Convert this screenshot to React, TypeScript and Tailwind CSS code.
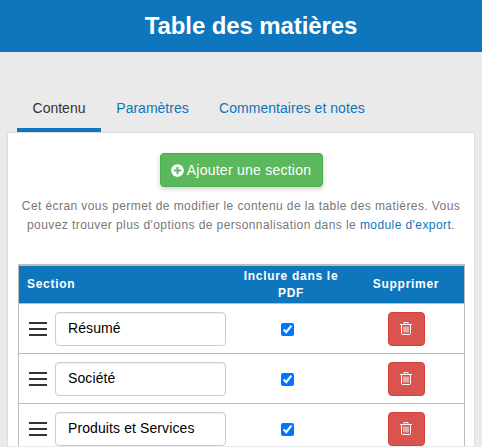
import { FaPlusCircle } from 'react-icons/fa';

const rows = ['Résumé', 'Société', 'Produits et Services'];

function TrashIcon() {
  return (
    <svg width="12" height="13" viewBox="0 0 12 13" fill="none" stroke="white" strokeWidth="1">
      <path d="M0 2.5h12M4 2.5V.5h4v2" />
      <path d="M1.5 2.5v9a1 1 0 0 0 1 1h7a1 1 0 0 0 1-1v-9" />
      <path d="M4 4.5v6M6 4.5v6M8 4.5v6" />
    </svg>
  );
}

function Row({ label }: { label: string }) {
  return (
    <div className="grid grid-cols-[219px_1fr_120px] h-[50px] items-center border-b border-[#bbbbbb] shrink-0">
      <div className="flex items-center pl-[10px] gap-2">
        <div className="flex flex-col gap-[4px] w-[18px]">
          <div className="h-[2px] bg-[#333333]" />
          <div className="h-[2px] bg-[#333333]" />
          <div className="h-[2px] bg-[#333333]" />
        </div>
        <div className="w-[171px] h-[34px] border border-[#cccccc] rounded-[4px] bg-white flex items-center pl-[12px] text-[14px] text-black shadow-[inset_0_1px_1px_rgba(0,0,0,0.075)] tracking-[0.1px]">
          {label}
        </div>
      </div>
      <div className="flex justify-center pr-[7px] pt-[2px]">
        <input type="checkbox" defaultChecked className="w-[13px] h-[13px] accent-[#0075ff]" />
      </div>
      <div className="flex justify-center pl-[4px]">
        <button className="w-[37px] h-[34px] bg-[#d9534f] border border-[#d43f3a] rounded-[4px] flex items-center justify-center">
          <TrashIcon />
        </button>
      </div>
    </div>
  );
}

export default function App() {
  return (
    <div className="h-[447px] overflow-hidden bg-[#eaeaea] font-['Liberation_Sans',Arial,sans-serif] text-[14px]">
      <header className="h-[52px] bg-[#0e76bc] flex items-center justify-center pl-[20px] text-white font-bold text-[24px] tracking-[-0.1px]">
        Table des matières
      </header>
      <nav className="flex mt-[38px] pl-[17px] h-[42px] text-[14px]">
        <div className="w-[84px] h-[42px] border-b-4 border-[#0e76bc] flex items-center justify-center pb-[1px] text-[#333333]">
          Contenu
        </div>
        <div className="w-[103px] flex items-center justify-center pb-[5px] text-[#0e76bc]">Paramètres</div>
        <div className="ml-[-1px] pl-[16px] flex items-center pb-[5px] text-[#0e76bc] tracking-[0.05px]">Commentaires et notes</div>
      </nav>
      <main className="mx-[7px] w-[468px] border-x border-t border-[#dddddd] bg-white h-[314px] overflow-hidden px-[10px] flex flex-col">
        <div className="flex justify-center mt-[20px]">
          <button className="w-[163px] h-[34px] shrink-0 bg-[#5cb85c] border border-[#4cae4c] rounded-[4px] text-white flex items-center justify-center gap-[3px] tracking-[0.25px] shadow-[0_2px_5px_rgba(0,0,0,0.2)]">
            <FaPlusCircle className="w-[13px] h-[13px]" />
            Ajouter une section
          </button>
        </div>
        <p className="mt-[10px] text-center text-[12px] leading-[19px] text-[#777777] tracking-[0.42px]">
          Cet écran vous permet de modifier le contenu de la table des matières. Vous pouvez trouver plus d'options de personnalisation dans le{' '}
          <span className="text-[#0e76bc]">module d'export</span>.
        </p>
        <div className="mt-[29px] w-[447px] border-x border-t-2 border-[#bbbbbb] flex flex-col shrink-0">
          <div className="grid grid-cols-[219px_1fr_120px] h-[38px] items-center bg-[#0e76bc] text-white font-bold text-[12px] leading-[17px] tracking-[0.7px] border-b border-[#bbbbbb] shrink-0">
            <div className="pl-[8px]">Section</div>
            <div className="text-center">Inclure dans le PDF</div>
            <div className="text-center pl-[4px]">Supprimer</div>
          </div>
          {rows.map((r) => (
            <Row key={r} label={r} />
          ))}
        </div>
      </main>
    </div>
  );
}
